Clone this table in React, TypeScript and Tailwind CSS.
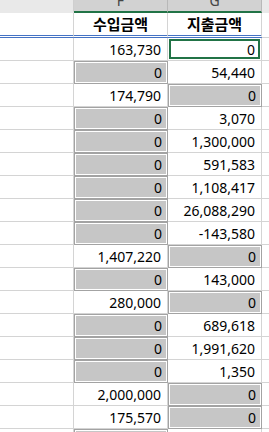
import React from "react";

type Row = { f: string; g: string; grayF?: boolean; grayG?: boolean; sel?: boolean };

const rows: Row[] = [
  { f: "163,730", g: "0", sel: true },
  { f: "0", g: "54,440", grayF: true },
  { f: "174,790", g: "0", grayG: true },
  { f: "0", g: "3,070", grayF: true },
  { f: "0", g: "1,300,000", grayF: true },
  { f: "0", g: "591,583", grayF: true },
  { f: "0", g: "1,108,417", grayF: true },
  { f: "0", g: "26,088,290", grayF: true },
  { f: "0", g: "-143,580", grayF: true },
  { f: "1,407,220", g: "0", grayG: true },
  { f: "0", g: "143,000", grayF: true },
  { f: "280,000", g: "0", grayG: true },
  { f: "0", g: "689,618", grayF: true },
  { f: "0", g: "1,991,620", grayF: true },
  { f: "0", g: "1,350", grayF: true },
  { f: "2,000,000", g: "0", grayG: true },
  { f: "175,570", g: "0", grayG: true },
  { f: "", g: "", grayF: true },
];

const font = { fontFamily: '"Noto Sans", "Noto Sans CJK KR", sans-serif' };

function Cell({ value, gray, sel }: { value: string; gray?: boolean; sel?: boolean }) {
  if (gray) {
    return (
      <div className="w-[94px] h-[23px] shrink-0 border-r border-b border-[#a3a3a3]">
        <div className="h-full border-l border-t border-[#a3a3a3]">
          <div className="h-full border border-white bg-[#c6c6c6] flex items-center justify-end pr-[4px] text-[14px] text-black">
            {value}
          </div>
        </div>
      </div>
    );
  }
  if (sel) {
    return (
      <div className="w-[94px] h-[23px] shrink-0 border-r border-b border-[#d4d4d4] p-px">
        <div className="h-full border-2 border-[#217346] flex items-center justify-end pr-[3px] text-[14px] text-black">
          {value}
        </div>
      </div>
    );
  }
  return (
    <div className="w-[94px] h-[23px] shrink-0 border-r border-b border-[#d4d4d4] flex items-center justify-end pr-[6px] text-[14px] text-black">
      {value}
    </div>
  );
}

export default function App() {
  return (
    <div className="w-[269px] h-[432px] overflow-hidden bg-white" style={font}>
      {/* column letters strip */}
      <div className="flex h-[13px]">
        <div className="w-[74px] shrink-0 bg-[#e9e9e9] border-r border-[#cfcfcf] border-b-2 border-b-[#e9e9e9]" />
        <div className="w-[94px] shrink-0 bg-[#d2d2d2] border-r border-[#b8b8b8] border-b-2 border-b-[#217346] overflow-hidden flex justify-center">
          <span className="text-[14px] leading-[14px] -mt-[6px] text-[#444]">F</span>
        </div>
        <div className="w-[94px] shrink-0 bg-[#d2d2d2] border-r border-[#b8b8b8] border-b-2 border-b-[#217346] overflow-hidden flex justify-center">
          <span className="text-[14px] leading-[14px] -mt-[6px] text-[#444]">G</span>
        </div>
        <div className="flex-1 bg-[#e9e9e9] border-b-2 border-b-[#e9e9e9]" />
      </div>

      {/* header row */}
      <div className="flex h-[25px]">
        <div className="w-[74px] shrink-0 border-r border-[#d4d4d4] border-b-[3px] border-double border-b-[#4472c4]" />
        <div className="w-[94px] shrink-0 border-r border-[#d4d4d4] border-b-[3px] border-double border-b-[#4472c4] flex items-center justify-center text-[15px] font-bold text-black">
          수입금액
        </div>
        <div className="w-[94px] shrink-0 border-r border-[#d4d4d4] border-b-[3px] border-double border-b-[#4472c4] flex items-center justify-center text-[15px] font-bold text-black">
          지출금액
        </div>
        <div className="flex-1 border-b border-[#d4d4d4]" />
      </div>

      {rows.map((r, i) => (
        <div key={i} className="flex">
          <div className="w-[74px] h-[23px] shrink-0 border-r border-b border-[#d4d4d4]" />
          <Cell value={r.f} gray={r.grayF} />
          <Cell value={r.g} gray={r.grayG} sel={r.sel} />
          <div className="flex-1 h-[23px] border-b border-[#d4d4d4]" />
        </div>
      ))}
    </div>
  );
}
